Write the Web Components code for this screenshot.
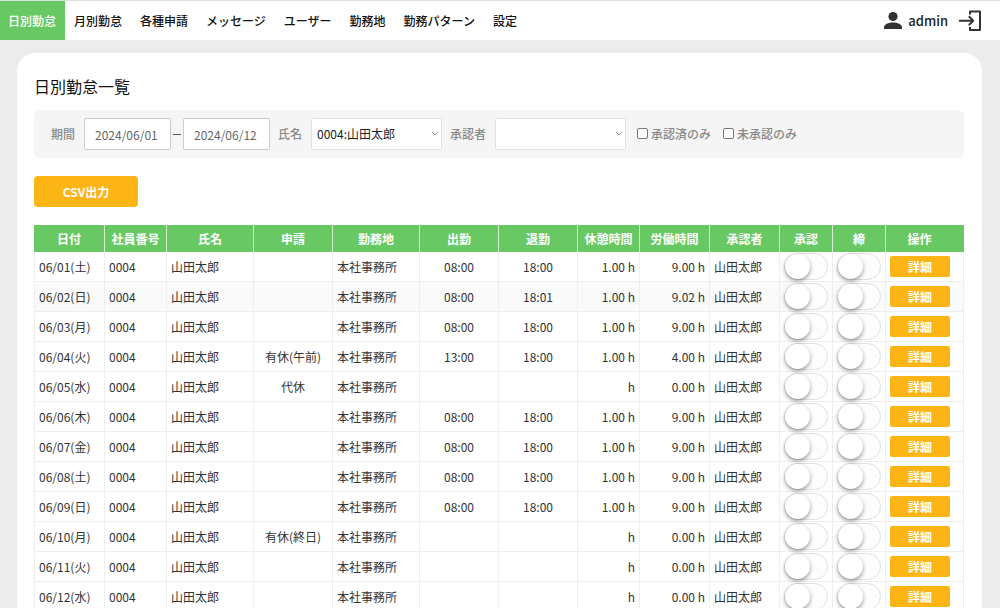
<!DOCTYPE html>
<html lang="ja">
<head>
  <meta charset="UTF-8">
  <meta name="viewport" content="width=device-width, initial-scale=1.0">
  <title>日別勤怠一覧</title>
  <style>
    html {
      scrollbar-width: none;
    }
    body {
      margin: 0;
      background: #ececec;
      color: #222;
      font-family: 'Noto Sans CJK JP', sans-serif;
      font-size: 12px;
      line-height: 18px;
    }
  </style>
</head>
<body>

<!-- ヘッダー -->
<template id="app-header-template">
  <style>
    :host {
      display: flex;
      align-items: center;
      justify-content: space-between;
      box-sizing: border-box;
      height: 40px;
      border-top: 1px solid #ddd;
      background: #fff;
    }
    nav {
      display: flex;
      align-self: stretch;
      gap: 1px;
    }
    .user {
      display: flex;
      align-items: center;
      gap: 5px;
      padding-right: 18px;
      font-size: 13px;
      font-weight: 500;
    }
    .user span {
      padding-right: 5px;
    }
    svg {
      display: block;
      fill: #333;
    }
    .user a {
      display: block;
    }
  </style>
  <nav><slot></slot></nav>
  <div class="user">
    <svg width="20" height="22" viewBox="1 0 20 22"><circle cx="11" cy="6.500" r="4.600"/><path d="M2 19v-1.600c0-3.200 4.500-4.800 9-4.800s9 1.600 9 4.800v1.600z"/></svg>
    <span><slot name="user"></slot></span>
    <a href="#logout" aria-label="ログアウト">
      <svg width="24" height="22" viewBox="0 0 24 22" style="fill:none;stroke:#333;stroke-width:2;stroke-linejoin:round"><path d="M12 4.500V1.500H22V20H12V17"/><path d="M1 10.700H15M10.800 6.300l4.400 4.400-4.400 4.400"/></svg>
    </a>
  </div>
</template>

<template id="nav-item-template">
  <style>
    :host {
      display: flex;
      font-weight: 500;
    }
    a {
      display: flex;
      align-items: center;
      padding: 0 9px 0 8px;
      color: #111;
      text-decoration: none;
    }
    :host([active]) a {
      background: #68c964;
      color: #fff;
    }
  </style>
  <a href="#"><slot></slot></a>
</template>

<!-- 白いパネル -->
<template id="page-panel-template">
  <style>
    :host {
      display: block;
      margin: 13px 18px 0 17px;
      padding: 21px 18px 0 17px;
      border-radius: 18px 18px 0 0;
      background: #fff;
    }
    h1 {
      margin: 0 0 12px;
      font-size: 16px;
      font-weight: 400;
      line-height: 24px;
      color: #111;
    }
  </style>
  <h1><slot name="title"></slot></h1>
  <slot></slot>
</template>

<!-- 検索条件 -->
<template id="filter-bar-template">
  <style>
    :host {
      display: flex;
      align-items: center;
      padding: 8px 17px;
      border-radius: 6px;
      background: #f5f5f5;
      color: #888;
      font-weight: 500;
    }
    .field {
      display: flex;
      align-items: center;
      gap: 9px;
      margin-right: 8px;
    }
    .range {
      display: flex;
      align-items: center;
      gap: 2px;
    }
    .dash {
      width: 8px;
      height: 1px;
      background: #555;
    }
    input[type=text],
    select {
      appearance: none;
      box-sizing: border-box;
      height: 32px;
      margin: 0;
      border: 1px solid #ccc;
      border-radius: 2px;
      background: #fff;
      font: inherit;
      font-weight: 400;
    }
    input[type=text] {
      width: 87px;
      padding: 0 10px;
      color: #666;
    }
    select {
      width: 131px;
      padding: 0 5px;
      border-color: #e2e2e2;
      color: #222;
    }
    .select {
      display: grid;
      align-items: center;
    }
    .select > * {
      grid-area: 1 / 1;
    }
    .select svg {
      justify-self: end;
      margin-right: 3px;
      fill: none;
      stroke: #999;
      pointer-events: none;
    }
    .checks {
      display: flex;
      gap: 12px;
      margin-left: 3px;
    }
    .checks label {
      display: flex;
      align-items: center;
      gap: 3px;
    }
    input[type=checkbox] {
      appearance: none;
      box-sizing: border-box;
      width: 11px;
      height: 11px;
      margin: 0 0 2px;
      border: 1px solid #777;
      border-radius: 2px;
      background: #fff;
    }
    input[type=checkbox]:checked {
      background: #68c964;
    }
  </style>
  <div class="field">
    <label for="from">期間</label>
    <div class="range">
      <input type="text" id="from" value="2024/06/01">
      <span class="dash"></span>
      <input type="text" id="to" value="2024/06/12" aria-label="期間 終了日">
    </div>
  </div>
  <div class="field">
    <label for="employee">氏名</label>
    <div class="select">
      <select id="employee"><option>0004:山田太郎</option></select>
      <svg width="8" height="6" viewBox="0 0 8 6"><path d="M1 1l3 3 3-3"/></svg>
    </div>
  </div>
  <div class="field">
    <label for="approver">承認者</label>
    <div class="select">
      <select id="approver"><option></option></select>
      <svg width="8" height="6" viewBox="0 0 8 6"><path d="M1 1l3 3 3-3"/></svg>
    </div>
  </div>
  <div class="checks">
    <label><input type="checkbox">承認済のみ</label>
    <label><input type="checkbox">未承認のみ</label>
  </div>
</template>

<!-- ボタン -->
<template id="action-button-template">
  <style>
    :host {
      display: block;
      width: 104px;
    }
    :host([small]) {
      width: 60px;
    }
    button {
      display: block;
      width: 100%;
      height: 31px;
      padding: 0;
      border: 0;
      border-radius: 4px;
      background: #fcb515;
      color: #fff;
      font: inherit;
      font-weight: 700;
      cursor: pointer;
    }
    :host([small]) button {
      height: 21px;
      border-radius: 2px;
    }
  </style>
  <button type="button"><slot></slot></button>
</template>

<!-- トグルスイッチ -->
<template id="toggle-switch-template">
  <style>
    :host {
      display: block;
      width: 44px;
    }
    input {
      appearance: none;
      display: flex;
      align-items: center;
      box-sizing: border-box;
      width: 44px;
      height: 27px;
      margin: 0;
      border: 1px solid #e0e0e0;
      border-radius: 14px;
      background: #fdfdfd;
      cursor: pointer;
    }
    input::before {
      content: '';
      width: 25px;
      height: 25px;
      border-radius: 50%;
      background: #fff;
      box-shadow: 0 2px 4px rgba(0, 0, 0, 0.4);
    }
    input:checked {
      justify-content: flex-end;
      background: #68c964;
    }
  </style>
  <input type="checkbox" role="switch">
</template>

<!-- 勤怠テーブル -->
<template id="attendance-table-template">
  <style>
    :host {
      display: block;
      margin-top: 18px;
    }
    table {
      width: 100%;
      table-layout: fixed;
      border-collapse: separate;
      border-spacing: 0;
    }
    th {
      height: 27px;
      padding: 0;
      border-right: 1px solid #d5f0d3;
      background: #68c964;
      color: #fff;
      font-weight: 700;
    }
    th:last-child {
      padding-right: 10px;
      border-right-color: #68c964;
    }
    td {
      box-sizing: border-box;
      height: 30px;
      padding: 0 4px;
      border-right: 1px solid #eee;
      border-bottom: 1px solid #eee;
      color: #333;
      white-space: nowrap;
    }
    td:first-child {
      border-left: 1px solid #eee;
    }
    tr.hover td {
      background: #fafafa;
    }
    .center {
      text-align: center;
    }
    .right {
      text-align: right;
    }
    td.switch {
      padding: 0 4px;
    }
  </style>
  <table>
    <colgroup>
      <col style="width:71px"><col style="width:62px"><col style="width:87px">
      <col style="width:79px"><col style="width:87px"><col style="width:79px">
      <col style="width:79px"><col style="width:62px"><col style="width:70px">
      <col style="width:70px"><col style="width:53px"><col style="width:53px">
      <col style="width:78px">
    </colgroup>
    <thead>
      <tr>
        <th>日付</th><th>社員番号</th><th>氏名</th><th>申請</th><th>勤務地</th>
        <th>出勤</th><th>退勤</th><th>休憩時間</th><th>労働時間</th><th>承認者</th>
        <th>承認</th><th>締</th><th>操作</th>
      </tr>
    </thead>
    <tbody></tbody>
  </table>
</template>

<script>
  // テンプレートを shadow root に複製する共通クラス
  class TemplateElement extends HTMLElement {
    constructor() {
      super();
      const template = document.getElementById(this.localName + '-template');
      this.attachShadow({ mode: 'open' }).appendChild(template.content.cloneNode(true));
    }
  }

  class AppHeader extends TemplateElement {}
  class NavItem extends TemplateElement {}
  class PagePanel extends TemplateElement {}
  class FilterBar extends TemplateElement {}
  class ActionButton extends TemplateElement {}

  class ToggleSwitch extends TemplateElement {
    connectedCallback() {
      this.shadowRoot.querySelector('input').setAttribute('aria-label', this.getAttribute('label'));
    }
  }

  // 日付, 申請, 出勤, 退勤, 休憩時間, 労働時間
  const records = [
    ['06/01(土)', '', '08:00', '18:00', '1.00', '9.00'],
    ['06/02(日)', '', '08:00', '18:01', '1.00', '9.02'],
    ['06/03(月)', '', '08:00', '18:00', '1.00', '9.00'],
    ['06/04(火)', '有休(午前)', '13:00', '18:00', '1.00', '4.00'],
    ['06/05(水)', '代休', '', '', '', '0.00'],
    ['06/06(木)', '', '08:00', '18:00', '1.00', '9.00'],
    ['06/07(金)', '', '08:00', '18:00', '1.00', '9.00'],
    ['06/08(土)', '', '08:00', '18:00', '1.00', '9.00'],
    ['06/09(日)', '', '08:00', '18:00', '1.00', '9.00'],
    ['06/10(月)', '有休(終日)', '', '', '', '0.00'],
    ['06/11(火)', '', '', '', '', '0.00'],
    ['06/12(水)', '', '', '', '', '0.00']
  ];

  class AttendanceTable extends TemplateElement {
    connectedCallback() {
      this.shadowRoot.querySelector('tbody').innerHTML = records.map((r, i) => `
        <tr${i === 1 ? ' class="hover"' : ''}>
          <td>${r[0]}</td>
          <td>0004</td>
          <td>山田太郎</td>
          <td class="center">${r[1]}</td>
          <td>本社事務所</td>
          <td class="center">${r[2]}</td>
          <td class="center">${r[3]}</td>
          <td class="right">${r[4]} h</td>
          <td class="right">${r[5]} h</td>
          <td>山田太郎</td>
          <td class="switch"><toggle-switch label="承認"></toggle-switch></td>
          <td class="switch"><toggle-switch label="締"></toggle-switch></td>
          <td><action-button small>詳細</action-button></td>
        </tr>`).join('');
    }
  }

  customElements.define('app-header', AppHeader);
  customElements.define('nav-item', NavItem);
  customElements.define('page-panel', PagePanel);
  customElements.define('filter-bar', FilterBar);
  customElements.define('action-button', ActionButton);
  customElements.define('toggle-switch', ToggleSwitch);
  customElements.define('attendance-table', AttendanceTable);
</script>

<app-header>
  <nav-item active>日別勤怠</nav-item>
  <nav-item>月別勤怠</nav-item>
  <nav-item>各種申請</nav-item>
  <nav-item>メッセージ</nav-item>
  <nav-item>ユーザー</nav-item>
  <nav-item>勤務地</nav-item>
  <nav-item>勤務パターン</nav-item>
  <nav-item>設定</nav-item>
  <span slot="user">admin</span>
</app-header>

<page-panel>
  <span slot="title">日別勤怠一覧</span>
  <filter-bar></filter-bar>
  <action-button style="margin-top:18px">CSV出力</action-button>
  <attendance-table></attendance-table>
</page-panel>

</body>
</html>
